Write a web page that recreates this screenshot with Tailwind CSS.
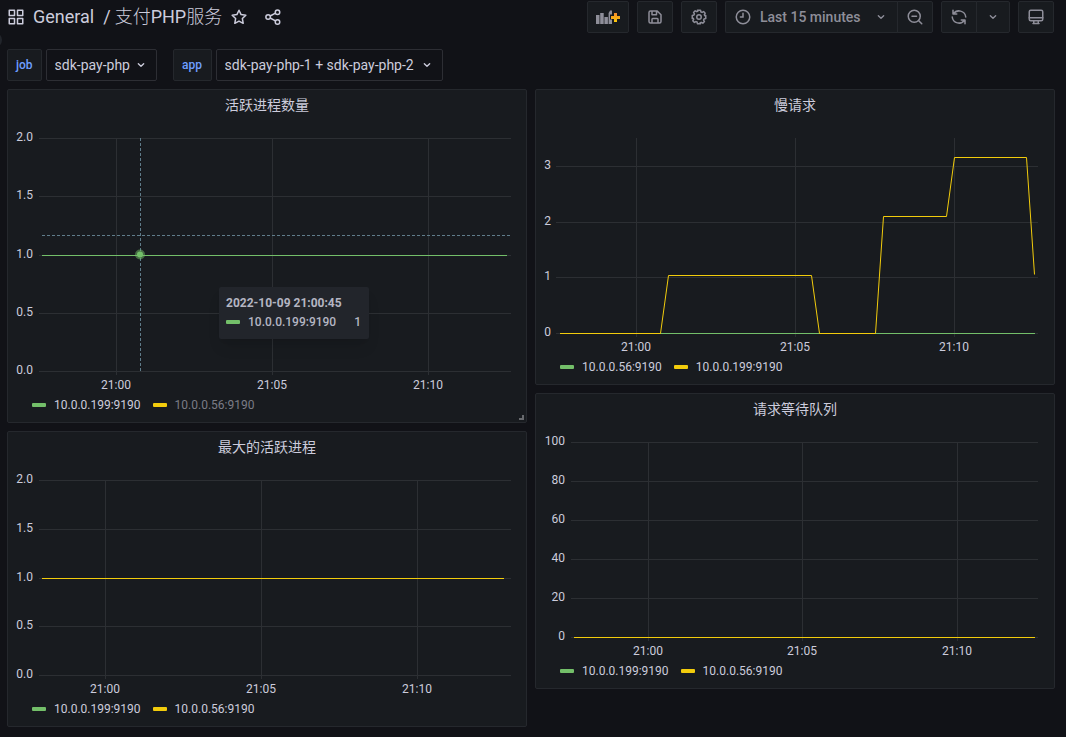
<!DOCTYPE html>
<html lang="zh-CN">
<head>
<meta charset="utf-8">
<meta name="viewport" content="width=device-width, initial-scale=1">
<title>支付PHP服务 - Grafana</title>
<script src="https://cdn.jsdelivr.net/npm/@tailwindcss/browser@4"></script>
</head>
<body class="relative min-h-screen overflow-x-hidden bg-[#111217] font-[Roboto,'Noto_Sans_CJK_SC',sans-serif] text-sm text-[#ccccdc]">

<!-- side menu handle, mostly off screen -->
<span class="absolute top-8 -left-3.5 size-4 rounded-full bg-[#22252b]"></span>

<header class="flex items-start justify-between gap-4 pt-px pr-3 pl-[7px]">
  <div class="flex h-8 items-center whitespace-nowrap">
    <svg class="size-[18px]" viewBox="0 0 24 24" fill="none" stroke="currentColor" stroke-width="2" stroke-linejoin="round"><path d="M3 3h7v7H3zM14 3h7v7h-7zM3 14h7v7H3zM14 14h7v7h-7z"/></svg>
    <h1 class="ml-2 flex gap-[9px] text-lg font-normal"><a href="#" class="text-[#ccccdc]">General</a><span class="flex gap-1"><span>/</span><a href="#" class="font-light">支付<span class="font-normal">PHP</span>服务</a></span></h1>
    <button type="button" aria-label="Mark as favorite" class="ml-2"><svg class="size-[18px]" viewBox="0 0 24 24" fill="none" stroke="currentColor" stroke-width="2" stroke-linejoin="round"><path d="M12 3l2.8 5.8 6.3.9-4.600 4.400 1.100 6.300L12 17.500l-5.600 2.900 1.100-6.300L2.900 9.700l6.300-.9z"/></svg></button>
    <button type="button" aria-label="Share dashboard" class="ml-4"><svg class="size-[18px]" viewBox="0 0 24 24" fill="none" stroke="currentColor" stroke-width="2"><circle cx="18" cy="5.500" r="3"/><circle cx="5.500" cy="12" r="3"/><circle cx="18" cy="18.500" r="3"/><path d="M8.200 10.700l7.100-3.800M8.200 13.300l7.100 3.800"/></svg></button>
  </div>
  <div class="flex gap-2 text-[#8e8e99]">
    <button type="button" aria-label="Add panel" class="flex h-8 w-[42px] items-center justify-center rounded-xs border border-[#25282d] bg-[#181b1f]">
      <svg class="h-4 w-[26px]" viewBox="0 0 26 16"><path fill="currentColor" d="M1 6h3.500v9H1zM5.200 4h3.500v11H5.200zM9.400 8h3.500v7H9.400zM13.600 4l1.500-2.500h1.900v4h-2v5h2V15h-3.400z"/><path d="M20.500 4v9M16 8.500h9" stroke="url(#plus)" stroke-width="3"/><defs><linearGradient id="plus" gradientUnits="userSpaceOnUse" x1="0" y1="13" x2="0" y2="4"><stop stop-color="#fbca0a"/><stop offset="1" stop-color="#f58a2c"/></linearGradient></defs></svg>
    </button>
    <button type="button" aria-label="Save dashboard" class="flex h-8 w-9 items-center justify-center rounded-xs border border-[#25282d] bg-[#181b1f]">
      <svg class="size-[18px]" viewBox="0 0 24 24" fill="none" stroke="currentColor" stroke-width="2" stroke-linejoin="round"><path d="M6 4h9l5 5v9a2 2 0 0 1-2 2H6a2 2 0 0 1-2-2V6a2 2 0 0 1 2-2zM8 4v5h6V5M8 20v-5a1 1 0 0 1 1-1h6a1 1 0 0 1 1 1v5"/></svg>
    </button>
    <button type="button" aria-label="Dashboard settings" class="flex h-8 w-9 items-center justify-center rounded-xs border border-[#25282d] bg-[#181b1f]">
      <svg class="size-[18px]" viewBox="0 0 24 24" fill="none" stroke="currentColor" stroke-width="2" stroke-linejoin="round"><circle cx="12" cy="12" r="3"/><path d="M10 3h4l.6 2.300 1.500.6 2-1.200 2.200 2.200-1.200 2 .6 1.500L21 10v4l-2.300.6-.6 1.500 1.200 2-2.200 2.200-2-1.200-1.500.6L14 21h-4l-.6-2.300-1.500-.6-2 1.200-2.200-2.200 1.200-2-.6-1.500L3 14v-4l2.300-.6.6-1.500-1.200-2 2.200-2.200 2 1.200 1.500-.6z"/></svg>
    </button>
    <div class="flex">
      <button type="button" class="flex h-8 w-[173px] items-center rounded-l-xs border border-r-0 border-[#25282d] bg-[#181b1f] pl-2 font-medium whitespace-nowrap">
        <svg class="size-[18px]" viewBox="0 0 24 24" fill="none" stroke="currentColor" stroke-width="2" stroke-linecap="round"><circle cx="12" cy="12" r="9"/><path d="M12 7v5H8.500"/></svg>
        <span class="ml-2">Last 15 minutes</span>
        <svg class="ml-3 size-4" viewBox="0 0 24 24" fill="none" stroke="currentColor" stroke-width="2" stroke-linecap="round" stroke-linejoin="round"><path d="M8 10l4 4 4-4"/></svg>
      </button>
      <button type="button" aria-label="Zoom out time range" class="-ml-px flex h-8 w-9 items-center justify-center rounded-r-xs border border-[#25282d] bg-[#181b1f]">
        <svg class="size-[18px]" viewBox="0 0 24 24" fill="none" stroke="currentColor" stroke-width="2" stroke-linecap="round"><circle cx="11" cy="11" r="8"/><path d="M17 17l4 4M8 11h6"/></svg>
      </button>
    </div>
    <div class="flex">
      <button type="button" aria-label="Refresh dashboard" class="flex h-8 w-9 items-center justify-center rounded-l-xs border border-[#25282d] bg-[#181b1f]">
        <svg class="size-[18px]" viewBox="0 0 24 24" fill="none" stroke="currentColor" stroke-width="2" stroke-linecap="round" stroke-linejoin="round"><path d="M4 3v5h5M4.500 8A9 9 0 0 1 21 12M20 21v-5h-5M19.500 16A9 9 0 0 1 3 12"/></svg>
      </button>
      <button type="button" aria-label="Refresh interval" class="-ml-px flex h-8 w-[34px] items-center justify-center rounded-r-xs border border-[#25282d] bg-[#181b1f]">
        <svg class="size-4" viewBox="0 0 24 24" fill="none" stroke="currentColor" stroke-width="2" stroke-linecap="round" stroke-linejoin="round"><path d="M8 10l4 4 4-4"/></svg>
      </button>
    </div>
    <button type="button" aria-label="Cycle view mode" class="flex h-8 w-9 items-center justify-center rounded-xs border border-[#25282d] bg-[#181b1f]">
      <svg class="size-[18px]" viewBox="0 0 24 24" fill="none" stroke="currentColor" stroke-width="2" stroke-linejoin="round" stroke-linecap="round"><rect x="3" y="3" width="18" height="14" rx="2"/><path d="M3 13h18M9 17v3M15 17v3M8 20.500h8"/></svg>
    </button>
  </div>
</header>

<main class="pr-[11px] pl-[7px]">
  <div class="mt-4 flex gap-4">
    <div class="flex gap-1">
      <label for="job" class="flex h-8 items-center rounded-xs border border-[#25282d] bg-[#181b1f] px-2 text-xs font-medium text-[#6e9fff]">job</label>
      <div class="relative">
        <select id="job" class="h-8 w-[111px] appearance-none rounded-xs border border-[#2d2e34] bg-[#111217] pl-2"><option>sdk-pay-php</option></select>
        <svg class="pointer-events-none absolute top-2 right-2 size-4" viewBox="0 0 24 24" fill="none" stroke="currentColor" stroke-width="2" stroke-linecap="round" stroke-linejoin="round"><path d="M8 10l4 4 4-4"/></svg>
      </div>
    </div>
    <div class="flex gap-1">
      <label for="app" class="flex h-8 w-[39px] items-center justify-center rounded-xs border border-[#25282d] bg-[#181b1f] text-xs font-medium text-[#6e9fff]">app</label>
      <div class="relative">
        <select id="app" class="h-8 w-[227px] appearance-none rounded-xs border border-[#2d2e34] bg-[#111217] pl-2"><option>sdk-pay-php-1 + sdk-pay-php-2</option></select>
        <svg class="pointer-events-none absolute top-2 right-2 size-4" viewBox="0 0 24 24" fill="none" stroke="currentColor" stroke-width="2" stroke-linecap="round" stroke-linejoin="round"><path d="M8 10l4 4 4-4"/></svg>
      </div>
    </div>
  </div>

  <div class="mt-2 grid grid-cols-2 items-start gap-2 pb-2">
    <div class="flex flex-col gap-2">

      <section class="relative rounded-xs border border-[#25282d] bg-[#181b1f] pb-[5px]">
        <h2 class="text-center leading-[30px] font-normal">活跃进程数量</h2>
        <div class="relative">
          <svg class="block w-full" viewBox="0 0 518 273">
            <path stroke="#2c2f33" d="M31 18.500H503M31 76.500H503M31 135.500H503M31 193.500H503M31 251.500H503M108.500 18V255M264.500 18V255M420.500 18V255"/>
            <path stroke="#73bf69" d="M34 135.500H499"/>
            <path stroke="#607d8b" stroke-dasharray="3 2" d="M132.500 18V251M34 115.500H503"/>
            <circle cx="132" cy="134.500" r="5" fill="#73bf69" fill-opacity=".5"/><circle cx="132" cy="134.500" r="3" fill="#73bf69"/>
            <g class="text-xs" fill="#ccccdc" text-anchor="end"><text x="25" y="21">2.0</text><text x="25" y="79">1.5</text><text x="25" y="138">1.0</text><text x="25" y="196">0.5</text><text x="25" y="254">0.0</text></g>
            <g class="text-xs" fill="#ccccdc" text-anchor="middle"><text x="108" y="269">21:00</text><text x="264" y="269">21:05</text><text x="420" y="269">21:10</text></g>
          </svg>
          <div class="absolute top-[167px] left-[211px] rounded-xs bg-[#22252b] pt-[7px] pr-2 pb-2 pl-[7px] text-xs font-medium whitespace-nowrap text-[#b4b5c2] shadow-lg">
            <div class="font-bold leading-[19px]">2022-10-09 21:00:45</div>
            <div class="flex items-center leading-[18px]"><span class="h-1 w-3.5 rounded-[1px] bg-[#73bf69]"></span><span class="ml-2">10.0.0.199:9190</span><span class="ml-[18px]">1</span></div>
          </div>
        </div>
        <ul class="flex h-6 items-center gap-3 pl-6 text-xs">
          <li><button type="button" class="flex items-center gap-2"><span class="h-1 w-3.5 rounded-[1px] bg-[#73bf69]"></span>10.0.0.199:9190</button></li>
          <li><button type="button" class="flex items-center gap-2 text-[#7b7c86]"><span class="h-1 w-3.5 rounded-[1px] bg-[#f2cc0c]"></span>10.0.0.56:9190</button></li>
        </ul>
        <span class="absolute right-0.5 bottom-0.5 size-[5px] border-r-2 border-b-2 border-[#686a6e]"></span>
      </section>

      <section class="rounded-xs border border-[#25282d] bg-[#181b1f] pb-[5px]">
        <h2 class="text-center leading-[30px] font-normal">最大的活跃进程</h2>
        <svg class="block w-full" viewBox="0 0 518 235">
          <path stroke="#2c2f33" d="M31 18.500H503M31 67.500H503M31 116.500H503M31 164.500H503M31 213.500H503M97.500 18V217M253.500 18V217M409.500 18V217"/>
          <path stroke="#f2cc0c" d="M34 116.500H496"/>
          <g class="text-xs" fill="#ccccdc" text-anchor="end"><text x="25" y="21">2.0</text><text x="25" y="70">1.5</text><text x="25" y="119">1.0</text><text x="25" y="167">0.5</text><text x="25" y="216">0.0</text></g>
          <g class="text-xs" fill="#ccccdc" text-anchor="middle"><text x="97" y="231">21:00</text><text x="253" y="231">21:05</text><text x="409" y="231">21:10</text></g>
        </svg>
        <ul class="flex h-6 items-center gap-3 pl-6 text-xs">
          <li><button type="button" class="flex items-center gap-2"><span class="h-1 w-3.5 rounded-[1px] bg-[#73bf69]"></span>10.0.0.199:9190</button></li>
          <li><button type="button" class="flex items-center gap-2"><span class="h-1 w-3.5 rounded-[1px] bg-[#f2cc0c]"></span>10.0.0.56:9190</button></li>
        </ul>
      </section>
    </div>

    <div class="flex flex-col gap-2">
      <section class="rounded-xs border border-[#25282d] bg-[#181b1f] pb-[5px]">
        <h2 class="text-center leading-[30px] font-normal">慢请求</h2>
        <svg class="block w-full" viewBox="0 0 518 235">
          <path stroke="#2c2f33" d="M20 46.500H502M20 102.500H502M20 157.500H502M20 213.500H502M100.500 18V217M259.500 18V217M418.500 18V217"/>
          <path stroke="#73bf69" d="M24 213.500H499"/>
          <path stroke="#f2cc0c" fill="none" d="M24 213.500H124.500L132.500 155.500H275.500L283.500 213.500H339.500L347.500 96.500H410.500L418.500 37.500H490.500L498.500 154.500"/>
          <g class="text-xs" fill="#ccccdc" text-anchor="end"><text x="15" y="49">3</text><text x="15" y="105">2</text><text x="15" y="160">1</text><text x="15" y="216">0</text></g>
          <g class="text-xs" fill="#ccccdc" text-anchor="middle"><text x="100" y="231">21:00</text><text x="259" y="231">21:05</text><text x="418" y="231">21:10</text></g>
        </svg>
        <ul class="flex h-6 items-center gap-3 pl-6 text-xs">
          <li><button type="button" class="flex items-center gap-2"><span class="h-1 w-3.5 rounded-[1px] bg-[#73bf69]"></span>10.0.0.56:9190</button></li>
          <li><button type="button" class="flex items-center gap-2"><span class="h-1 w-3.5 rounded-[1px] bg-[#f2cc0c]"></span>10.0.0.199:9190</button></li>
        </ul>
      </section>

      <section class="rounded-xs border border-[#25282d] bg-[#181b1f] pb-[5px]">
        <h2 class="text-center leading-[30px] font-normal">请求等待队列</h2>
        <svg class="block w-full" viewBox="0 0 518 235">
          <path stroke="#2c2f33" d="M35 18.500H502M35 57.500H502M35 96.500H502M35 135.500H502M35 174.500H502M35 213.500H502M112.500 18V217M266.500 18V217M421.500 18V217"/>
          <path stroke="#f2cc0c" d="M38 213.500H499"/>
          <g class="text-xs" fill="#ccccdc" text-anchor="end"><text x="29" y="21">100</text><text x="29" y="60">80</text><text x="29" y="99">60</text><text x="29" y="138">40</text><text x="29" y="177">20</text><text x="29" y="216">0</text></g>
          <g class="text-xs" fill="#ccccdc" text-anchor="middle"><text x="112" y="231">21:00</text><text x="266" y="231">21:05</text><text x="421" y="231">21:10</text></g>
        </svg>
        <ul class="flex h-6 items-center gap-3 pl-6 text-xs">
          <li><button type="button" class="flex items-center gap-2"><span class="h-1 w-3.5 rounded-[1px] bg-[#73bf69]"></span>10.0.0.199:9190</button></li>
          <li><button type="button" class="flex items-center gap-2"><span class="h-1 w-3.5 rounded-[1px] bg-[#f2cc0c]"></span>10.0.0.56:9190</button></li>
        </ul>
      </section>
    </div>
  </div>
</main>
</body>
</html>
